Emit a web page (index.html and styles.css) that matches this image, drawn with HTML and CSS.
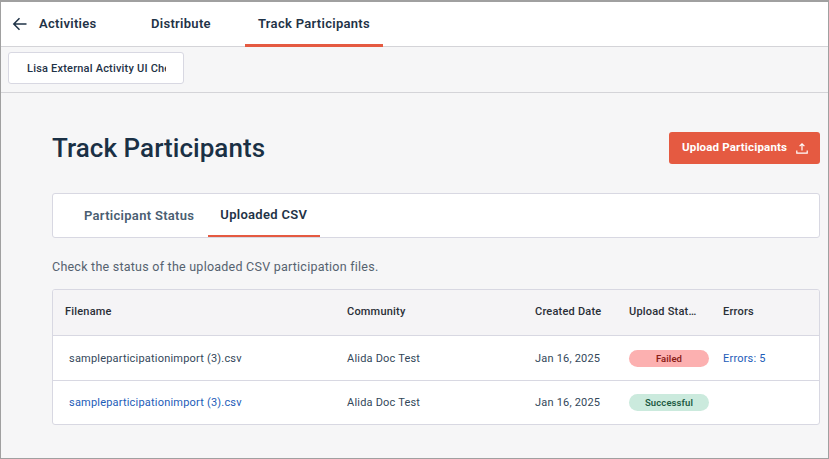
FILE: index.html
```html
<!DOCTYPE html>
<html lang="en">
<head>
<meta charset="utf-8">
<title>Track Participants</title>
<link rel="stylesheet" href="styles.css">
</head>
<body>
<div class="frame">
  <nav class="topnav">
    <a class="back" href="#" aria-label="Back">
      <svg width="16" height="16" viewBox="0 0 16 16" fill="none" stroke="#1f3347" stroke-width="1.5"><path d="M14.5 8H2M7.5 2.2 1.8 8l5.7 5.8"/></svg>
    </a>
    <span class="nav-item nav-activities">Activities</span>
    <span class="nav-item nav-distribute">Distribute</span>
    <span class="nav-item nav-active">Track Participants</span>
  </nav>
  <div class="tagbar">
    <div class="tag"><span class="tag-text">Lisa External Activity UI Check</span></div>
  </div>
  <main class="main">
    <header class="page-head">
      <h1 class="title">Track Participants</h1>
      <button class="upload" type="button">
        <span class="upload-label">Upload Participants</span>
        <svg width="12" height="12" viewBox="0 0 12 12" fill="none" stroke="#fff" stroke-width="1.2"><path d="M6 8.5V2M3.6 4.2 6 1.8l2.4 2.4"/><path d="M.8 8.6v2.6h10.4V8.6"/></svg>
      </button>
    </header>
    <div class="tabs">
      <span class="tab">Participant Status</span>
      <span class="tab tab-active">Uploaded CSV</span>
    </div>
    <p class="desc">Check the status of the uploaded CSV participation files.</p>
    <div class="table">
      <div class="row row-head">
        <div>Filename</div><div>Community</div><div>Created Date</div><div>Upload Stat…</div><div>Errors</div>
      </div>
      <div class="row">
        <div class="file">sampleparticipationimport (3).csv</div><div>Alida Doc Test</div><div>Jan 16, 2025</div>
        <div><span class="pill pill-fail">Failed</span></div><div class="link">Errors: 5</div>
      </div>
      <div class="row row-last">
        <div class="file link">sampleparticipationimport (3).csv</div><div>Alida Doc Test</div><div>Jan 16, 2025</div>
        <div><span class="pill pill-ok">Successful</span></div><div></div>
      </div>
    </div>
  </main>
</div>
</body>
</html>
```
FILE: styles.css
```css
* { box-sizing: border-box; }
html, body { margin: 0; padding: 0; }
body { width: 829px; height: 459px; overflow: hidden; font-family: Roboto, "Liberation Sans", sans-serif; color: #1f3347; }
.frame {
  width: 829px; height: 459px; background: #f6f6f7; overflow: hidden;
  border-style: solid; border-color: #a0a0a0; border-width: 2px 1px 1px 1px;
  display: flex; flex-direction: column;
}
.topnav {
  height: 45px; flex: none; background: #fff; border-bottom: 1px solid #d4d4d8;
  display: flex; align-items: stretch;
}
.back { width: 38px; flex: none; display: flex; align-items: center; padding-left: 11px; padding-bottom: 1px; }
.nav-item { display: flex; align-items: center; font-size: 13px; font-weight: 600; letter-spacing: .3px; padding-bottom: 1px; }
.nav-activities { width: 112px; }
.nav-distribute { width: 94px; }
.nav-active { padding: 1px 13px 0; height: 45px; border-bottom: 3px solid #e55a41; width: 138px; white-space: nowrap; }
.tagbar { height: 46px; flex: none; border-bottom: 1px solid #d4d4d8; padding-top: 5px; padding-left: 7px; }
.tag {
  width: 176px; height: 32px; background: #fff; border: 1px solid #d8d8e2; border-radius: 3px;
  padding: 0 17px 0 18px; display: flex; align-items: center;
}
.tag-text { font-size: 11px; font-weight: 500; letter-spacing: .2px; white-space: nowrap; overflow: hidden; color: #1f3347; }
.main { padding: 0 8px 0 51px; flex: 1; }
.page-head { height: 100px; display: flex; align-items: flex-start; justify-content: space-between; padding-top: 39px; }
.title { margin: 0; font-size: 26px; line-height: 32px; font-weight: 500; letter-spacing: .05px; color: #1a3045; }
.upload {
  width: 151px; height: 32px; border: 0; border-radius: 3px; background: #e55a41; color: #fff;
  font-family: inherit; font-size: 11.5px; font-weight: 700; letter-spacing: .17px;
  display: flex; align-items: center; justify-content: space-between; padding: 0 12px 0 13px;
}
.upload-label { position: relative; top: -1px; }
.tabs {
  height: 45px; background: #fff; border: 1px solid #d8d8e2; border-radius: 3px;
  display: flex; padding-left: 18px;
}
.tab { padding: 0 14px 1px 13px; display: flex; align-items: center; font-size: 13px; font-weight: 600; letter-spacing: .3px; color: #4a5e72; }
.tab-active { color: #1f3347; border-bottom: 2px solid #e55a41; padding: 0 13px 0 12px; height: 43px; }
.desc { margin: 0; height: 51px; padding-top: 20px; font-size: 12.5px; line-height: 17px; letter-spacing: .24px; color: #55626f; }
.table { background: #fff; border: 1px solid #d8d8e2; border-radius: 3px; overflow: hidden; }
.row {
  display: grid; grid-template-columns: 282px 188px 94px 94px 1fr; height: 45px; align-items: center;
  padding-left: 12px; font-size: 11px; letter-spacing: .2px; color: #33475a; border-bottom: 1px solid #d8d8e2;
}
.row-head { height: 46px; background: #f5f4f6; font-weight: 500; color: #2a2f36; letter-spacing: .2px; padding-bottom: 2px; }
.row-last { height: 43px; border-bottom: 0; }
.file { padding-left: 4px; }
.link { color: #1c5cb8; }
.pill {
  display: block; width: 80px; height: 17px; border-radius: 9px; text-align: center;
  font-size: 9.5px; line-height: 17px; font-weight: 600; letter-spacing: .1px;
}
.pill-fail { background: #fcb0b0; color: #8c1d18; }
.pill-ok { background: #cbeadd; color: #1d5a43; }
```
